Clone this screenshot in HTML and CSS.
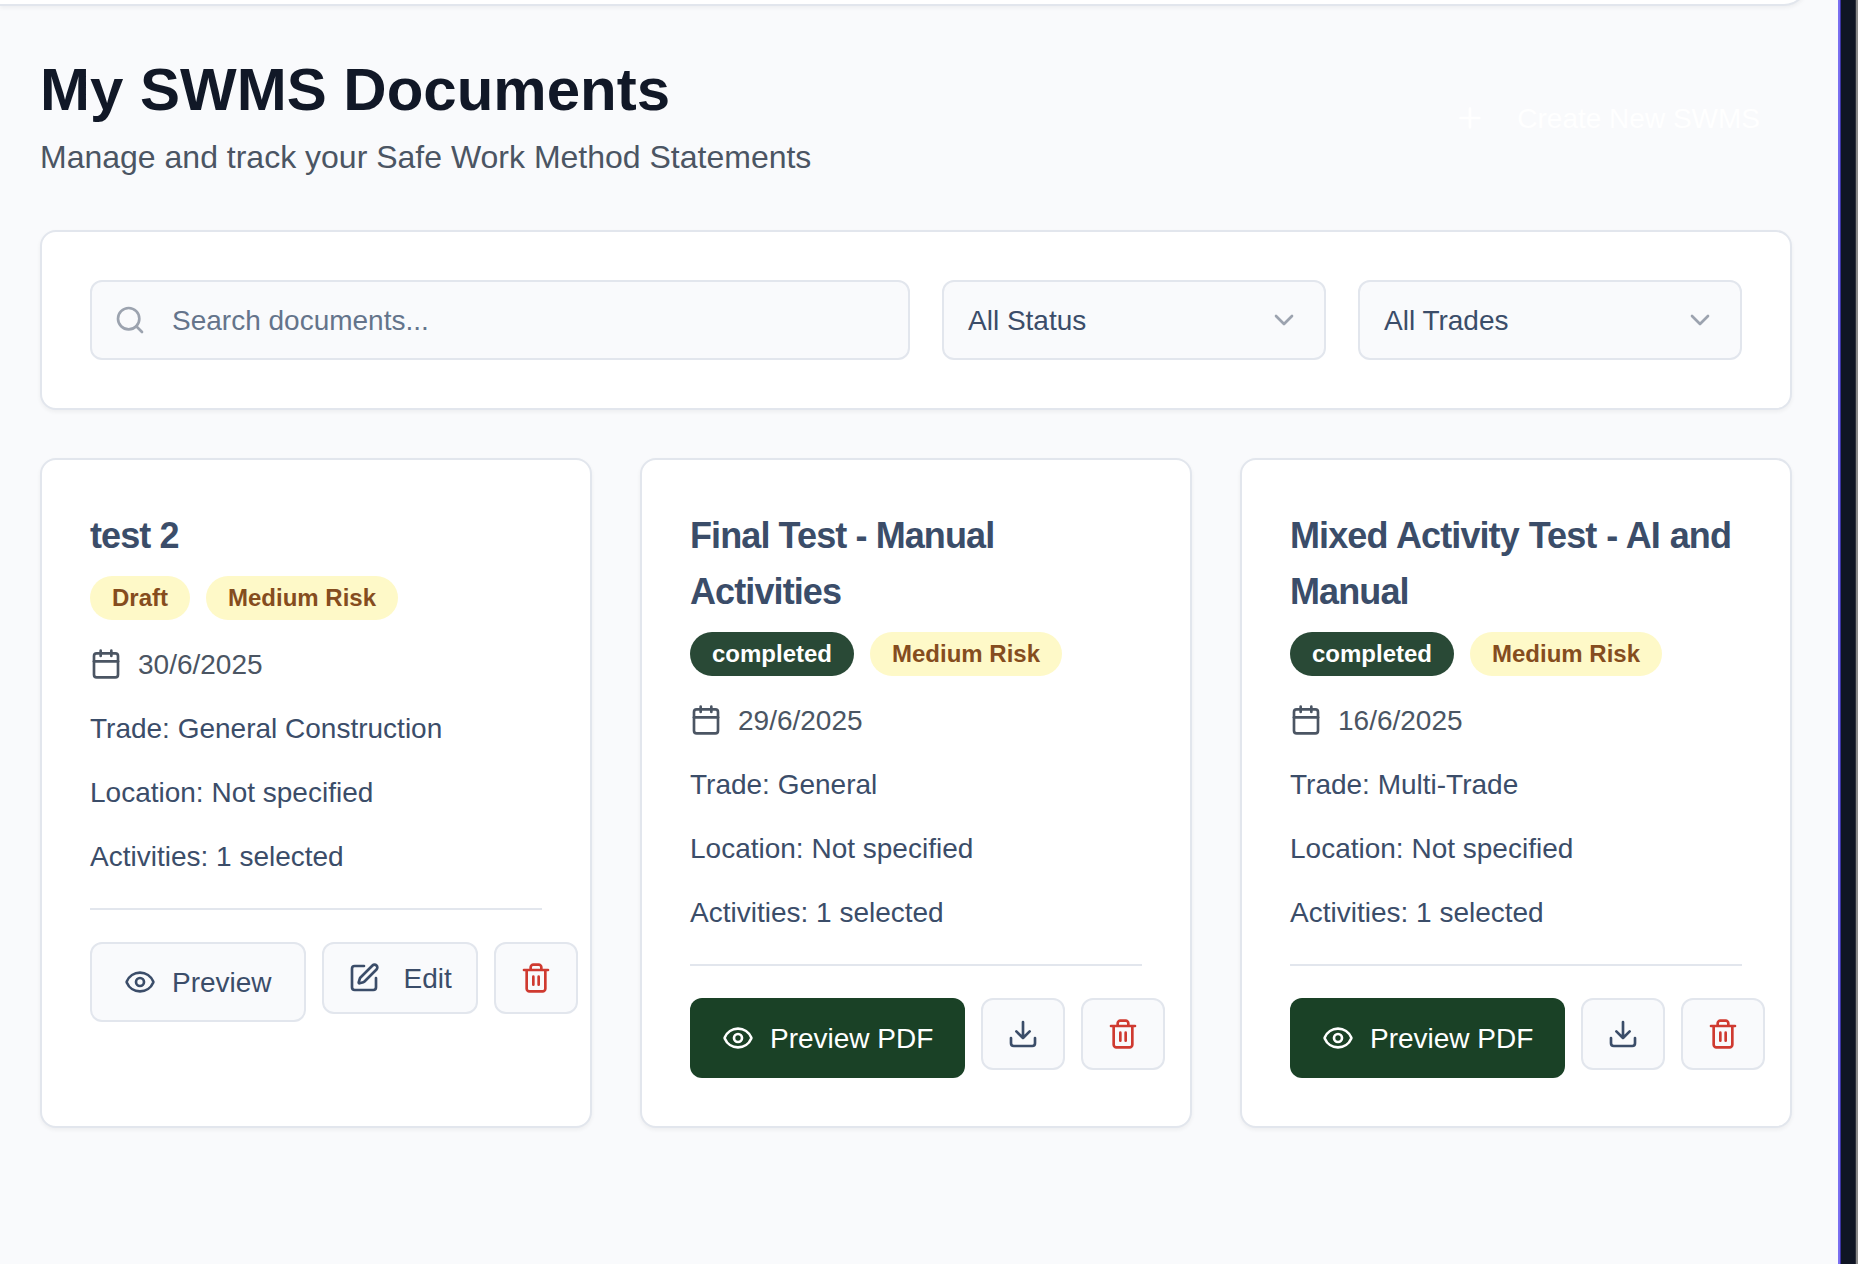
FILE: index.html
```html
<!DOCTYPE html>
<html lang="en">
<head>
<meta charset="utf-8">
<title>My SWMS Documents</title>
<link rel="stylesheet" href="styles.css">
</head>
<body>
<svg class="sprite" aria-hidden="true">
  <symbol id="search" viewBox="0 0 24 24"><circle cx="11" cy="11" r="8"/><path d="m21 21-4.3-4.3"/></symbol>
  <symbol id="chevron" viewBox="0 0 24 24"><path d="m6 9 6 6 6-6"/></symbol>
  <symbol id="plus" viewBox="0 0 24 24"><path d="M5 12h14M12 5v14"/></symbol>
  <symbol id="calendar" viewBox="0 0 24 24"><path d="M8 2v4M16 2v4"/><rect width="18" height="18" x="3" y="4" rx="2"/><path d="M3 10h18"/></symbol>
  <symbol id="eye" viewBox="0 0 24 24"><path d="M2.062 12.348a1 1 0 0 1 0-.696 10.75 10.75 0 0 1 19.876 0 1 1 0 0 1 0 .696 10.75 10.75 0 0 1-19.876 0"/><circle cx="12" cy="12" r="3"/></symbol>
  <symbol id="edit" viewBox="0 0 24 24"><path d="M12 3H5a2 2 0 0 0-2 2v14a2 2 0 0 0 2 2h14a2 2 0 0 0 2-2v-7"/><path d="M18.375 2.625a1 1 0 0 1 3 3l-9.013 9.014a2 2 0 0 1-.853.505l-2.873.84a.5.5 0 0 1-.62-.62l.84-2.873a2 2 0 0 1 .506-.852z"/></symbol>
  <symbol id="trash" viewBox="0 0 24 24"><path d="M3 6h18M19 6v14c0 1-1 2-2 2H7c-1 0-2-1-2-2V6M8 6V4c0-1 1-2 2-2h4c1 0 2 1 2 2v2M10 11v6M14 11v6"/></symbol>
  <symbol id="download" viewBox="0 0 24 24"><path d="M21 15v4a2 2 0 0 1-2 2H5a2 2 0 0 1-2-2v-4M7 10l5 5 5-5M12 15V3"/></symbol>
</svg>
<div class="shell">
  <div class="page">
    <header class="topbar"></header>
    <main class="content">
      <div class="heading">
        <div>
          <h1 class="title">My SWMS Documents</h1>
          <p class="subtitle">Manage and track your Safe Work Method Statements</p>
        </div>
        <button class="create"><svg class="icon"><use href="#plus"/></svg><span class="label">Create New SWMS</span></button>
      </div>

      <section class="panel filters">
        <label class="field search"><svg class="icon"><use href="#search"/></svg><span class="label">Search documents...</span></label>
        <div class="field select"><span class="label">All Status</span><svg class="icon"><use href="#chevron"/></svg></div>
        <div class="field select"><span class="label">All Trades</span><svg class="icon"><use href="#chevron"/></svg></div>
      </section>

      <section class="cards">
        <article class="panel card">
          <h3 class="name">test 2</h3>
          <div class="badges"><span class="badge">Draft</span><span class="badge">Medium Risk</span></div>
          <div class="date"><svg class="icon"><use href="#calendar"/></svg><span class="label">30/6/2025</span></div>
          <p class="line">Trade: General Construction</p>
          <p class="line">Location: Not specified</p>
          <p class="line">Activities: 1 selected</p>
          <div class="actions">
            <button class="btn large"><svg class="icon"><use href="#eye"/></svg><span class="label">Preview</span></button>
            <button class="btn edit"><svg class="icon"><use href="#edit"/></svg><span class="label">Edit</span></button>
            <button class="btn danger"><svg class="icon"><use href="#trash"/></svg></button>
          </div>
        </article>

        <article class="panel card">
          <h3 class="name">Final Test - Manual Activities</h3>
          <div class="badges"><span class="badge done">completed</span><span class="badge">Medium Risk</span></div>
          <div class="date"><svg class="icon"><use href="#calendar"/></svg><span class="label">29/6/2025</span></div>
          <p class="line">Trade: General</p>
          <p class="line">Location: Not specified</p>
          <p class="line">Activities: 1 selected</p>
          <div class="actions">
            <button class="btn large primary"><svg class="icon"><use href="#eye"/></svg><span class="label">Preview PDF</span></button>
            <button class="btn"><svg class="icon"><use href="#download"/></svg></button>
            <button class="btn danger"><svg class="icon"><use href="#trash"/></svg></button>
          </div>
        </article>

        <article class="panel card">
          <h3 class="name name-wide">Mixed Activity Test - AI and Manual</h3>
          <div class="badges"><span class="badge done">completed</span><span class="badge">Medium Risk</span></div>
          <div class="date"><svg class="icon"><use href="#calendar"/></svg><span class="label">16/6/2025</span></div>
          <p class="line">Trade: Multi-Trade</p>
          <p class="line">Location: Not specified</p>
          <p class="line">Activities: 1 selected</p>
          <div class="actions">
            <button class="btn large primary"><svg class="icon"><use href="#eye"/></svg><span class="label">Preview PDF</span></button>
            <button class="btn"><svg class="icon"><use href="#download"/></svg></button>
            <button class="btn danger"><svg class="icon"><use href="#trash"/></svg></button>
          </div>
        </article>
      </section>
    </main>
  </div>
  <div class="edge"></div>
</div>
</body>
</html>
```
FILE: styles.css
```css
* { box-sizing: border-box; margin: 0; padding: 0; }

body {
  font: 28px/40px "Liberation Sans", Arial, sans-serif;
  color: #3b4d69;
  background: #f9fafc;
  overflow: hidden;
}

.sprite { display: none; }

.icon {
  width: 32px;
  height: 32px;
  flex: none;
  fill: none;
  stroke: currentColor;
  stroke-width: 2;
  stroke-linecap: round;
  stroke-linejoin: round;
}

.label { padding-top: 2px; }

.shell { display: flex; height: 1264px; overflow: hidden; }
.page { flex: 1; min-width: 0; display: flow-root; }

.edge {
  width: 20px;
  background: #0f1524;
  border-left: 2px solid #7a6ff0;
  border-right: 2px solid #8a8a8a;
  box-shadow: inset 1px 0 #3a32a0, inset -1px 0 #2b2f3a;
}

.topbar {
  height: 30px;
  margin: -24px 30px 0 0;
  background: #fff;
  border: 2px solid #e2e6ed;
  border-width: 0 2px 2px 0;
  border-bottom-right-radius: 24px;
  box-shadow: 0 2px 4px rgba(0, 0, 0, .05);
}

.content { padding: 48px 46px 0 40px; }

.heading {
  display: flex;
  justify-content: space-between;
  align-items: center;
  margin-bottom: 48px;
}

.title { font-size: 60px; line-height: 72px; color: #111827; }
.subtitle { margin: 7px 0 1px; font-size: 32px; line-height: 48px; color: #4b5563; }

button { font: inherit; color: inherit; border: 0; background: none; }

.create {
  display: flex;
  align-items: center;
  gap: 31px;
  height: 80px;
  padding: 0 32px;
  color: #fff;
}

.panel {
  background: #fff;
  border: 2px solid #e2e6ed;
  border-radius: 16px;
  box-shadow: 0 2px 4px rgba(0, 0, 0, .05);
  padding: 48px;
}

.filters {
  display: grid;
  grid-template-columns: 820px 1fr 1fr;
  gap: 32px;
  margin-bottom: 48px;
}

.field {
  display: flex;
  align-items: center;
  height: 80px;
  padding: 0 24px;
  background: #f9fafc;
  border: 2px solid #e2e6ed;
  border-radius: 12px;
}

.field .icon { color: #9ca3af; }
.search { gap: 26px; padding-left: 22px; color: #64748b; }
.select { justify-content: space-between; }

.cards { display: grid; grid-template-columns: repeat(3, 1fr); gap: 48px; }
.card { min-width: 0; height: 670px; }
.name { font-size: 36px; line-height: 56px; letter-spacing: -.9px; }
.name-wide { word-spacing: .7px; }

.badges { display: flex; gap: 16px; margin-top: 12px; }

.badge {
  height: 44px;
  padding: 0 22px;
  border-radius: 22px;
  font-size: 24px;
  line-height: 44px;
  font-weight: 700;
  color: #854d1e;
  background: #fef9c8;
}

.done { color: #fff; background: #294936; }

.date { display: flex; align-items: center; gap: 16px; height: 40px; margin-top: 24px; color: #4b5563; }
.line { height: 40px; margin-top: 24px; line-height: 42px; }

.actions {
  display: flex;
  align-items: flex-start;
  gap: 16px;
  margin-top: 32px;
  padding-top: 32px;
  border-top: 2px solid #e2e6ed;
}

.btn {
  display: flex;
  flex: none;
  align-items: center;
  height: 72px;
  padding: 0 24px;
  background: #f9fafc;
  border: 2px solid #e2e6ed;
  border-radius: 12px;
}

.large { height: 80px; gap: 16px; padding: 0 32px; }
.primary { border: 0; color: #fff; background: #1a4126; }
.edit { gap: 24px; }
.danger { color: #cf3a30; }
```
